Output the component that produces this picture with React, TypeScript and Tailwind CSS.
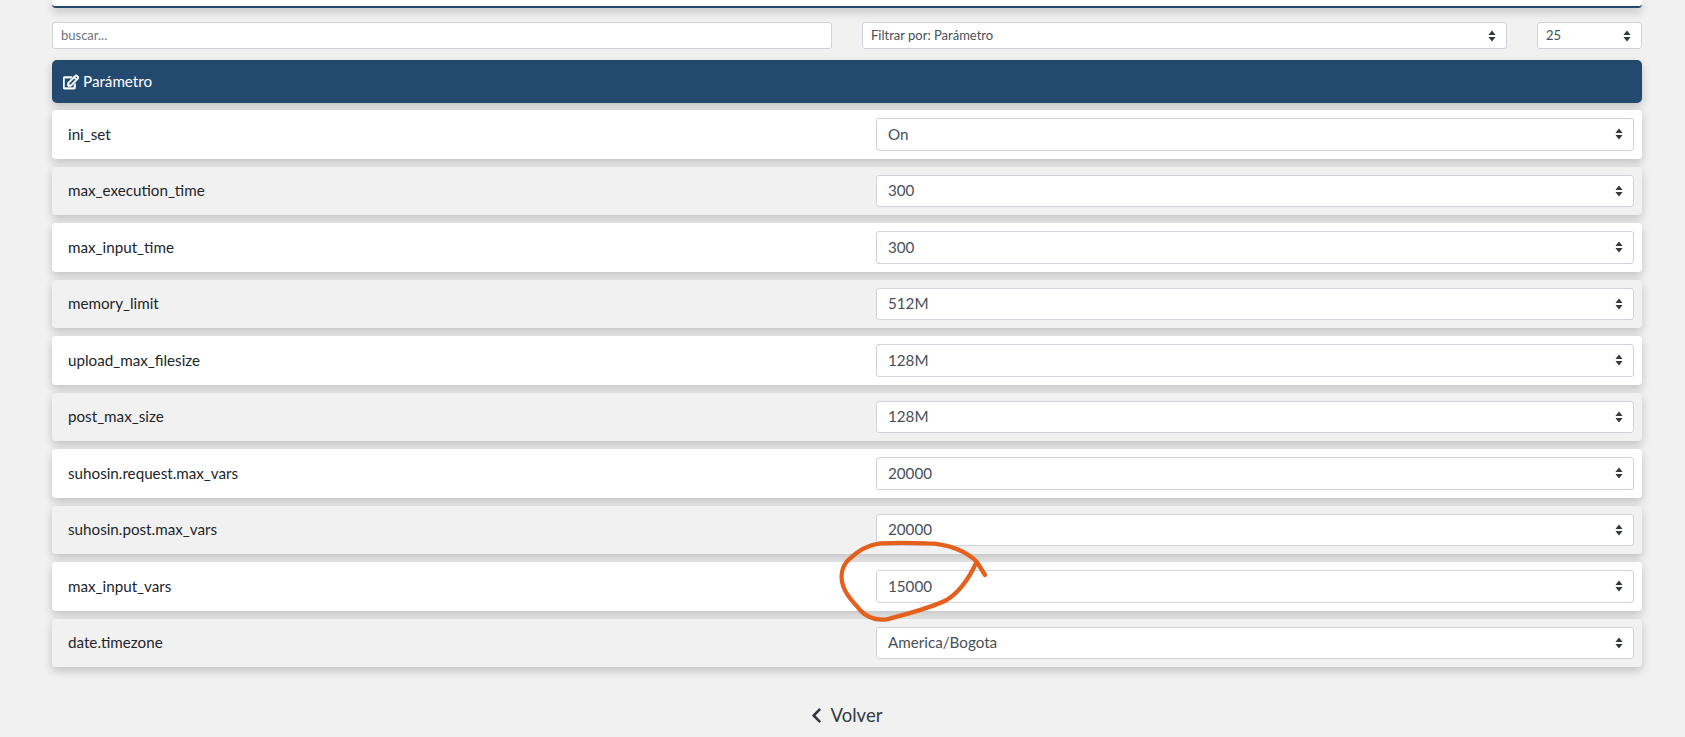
import { FaRegEdit, FaChevronLeft } from "react-icons/fa";

const rows = [
  { name: "ini_set", value: "On" },
  { name: "max_execution_time", value: "300" },
  { name: "max_input_time", value: "300" },
  { name: "memory_limit", value: "512M" },
  { name: "upload_max_filesize", value: "128M" },
  { name: "post_max_size", value: "128M" },
  { name: "suhosin.request.max_vars", value: "20000" },
  { name: "suhosin.post.max_vars", value: "20000" },
  { name: "max_input_vars", value: "15000" },
  { name: "date.timezone", value: "America/Bogota" },
];

function Arrows() {
  return (
    <svg viewBox="0 0 8 12" className="pointer-events-none absolute right-[11px] top-1/2 h-[12px] w-[8px] -translate-y-1/2">
      <path d="M4 0.5 L7.6 5 H0.4 Z M4 11.5 L0.4 7 H7.6 Z" fill="#343a40" />
    </svg>
  );
}

function Select({ value, className }: { value: string; className: string }) {
  return (
    <div className={`relative ${className}`}>
      <select
        defaultValue={value}
        className="h-full w-full appearance-none rounded-[3px] border border-[#ced4da] bg-white pl-[11px] pr-6 text-[#495057] outline-none"
      >
        <option>{value}</option>
      </select>
      <Arrows />
    </div>
  );
}

export default function App() {
  return (
    <div className="relative h-[737px] overflow-hidden bg-[#f1f1f1] pl-[52px] pr-[43px] font-['Lato','Noto_Sans',sans-serif] text-[15.2px] text-[#212529]">
      <div className="h-[8px] rounded-b-[4px] border-b-2 border-[#24496f] bg-white shadow-[0_4px_10px_rgba(0,0,0,0.2)]" />

      <div className="mt-[14px] flex h-[27px] items-stretch text-[13px]">
        <input
          placeholder="buscar..."
          className="w-[780px] rounded-[3px] border border-[#ced4da] bg-white px-[8px] text-[#495057] outline-none placeholder:text-[#6c757d]"
        />
        <Select value="Filtrar por: Parámetro" className="ml-[30px] w-[645px] [&>select]:pl-[8px]" />
        <Select value="25" className="ml-[30px] w-[105px] [&>select]:pl-[8px]" />
      </div>

      <div className="mt-[11px] flex h-[43px] items-center gap-[4px] rounded-[5px] bg-[#24496f] pl-[11px] text-white shadow-[0_4px_10px_rgba(0,0,0,0.2)]">
        <FaRegEdit size={16} stroke="currentColor" strokeWidth={28} />
        <span>Parámetro</span>
      </div>

      <div className="mt-[7px] flex flex-col gap-[8px]">
        {rows.map((row, i) => (
          <div
            key={row.name}
            className={`flex h-[48.5px] items-center justify-between rounded-[4px] pl-[16px] pr-[8px] shadow-[0_4px_10px_rgba(0,0,0,0.2)] ${
              i % 2 === 0 ? "bg-white" : "bg-[#f1f1f1]"
            }`}
          >
            <span>{row.name}</span>
            <Select value={row.value} className="h-[32.5px] w-[758px]" />
          </div>
        ))}
      </div>

      <div className="mt-[35px] flex items-center justify-center gap-[6px] pr-[4px] text-[18.5px] text-[#343a40]">
        <FaChevronLeft size={17} />
        <span>Volver</span>
      </div>

      <svg viewBox="0 0 720 621" className="absolute left-[800px] top-[530px] h-[207px] w-[240px]" fill="none">
        <path
          d="M555 135 L530 95 C510 75 490 65 470 57 C440 45 410 40 380 40 C330 38 280 38 240 40 C200 45 170 65 145 90 C125 110 120 140 130 170 C140 200 160 215 180 240 C200 262 225 272 260 268 C310 255 390 235 440 210 C480 185 510 140 530 95"
          stroke="#e5601d"
          strokeWidth="13"
          strokeLinecap="round"
          strokeLinejoin="round"
        />
      </svg>
    </div>
  );
}
